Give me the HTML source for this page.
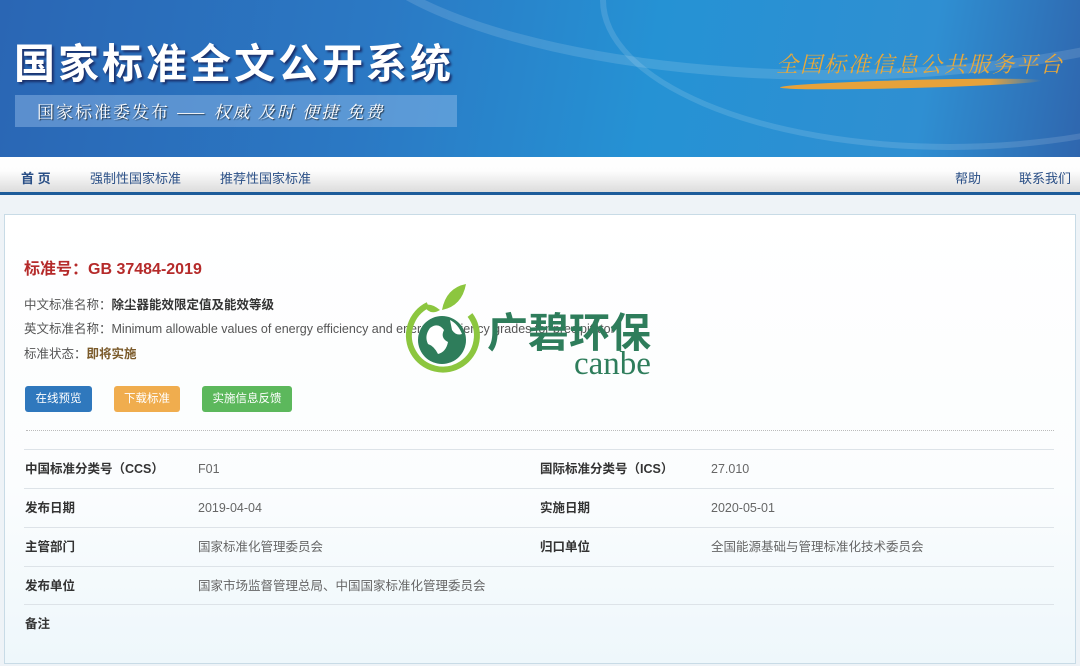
<!DOCTYPE html>
<html><head><meta charset="utf-8"><style>
*{margin:0;padding:0;box-sizing:border-box}
body{width:1080px;height:666px;overflow:hidden;background:#eef3f7;font-family:"Liberation Sans","Noto Sans CJK SC",sans-serif;position:relative}
.hdr{position:absolute;left:0;top:0;width:1080px;height:157px;background:linear-gradient(100deg,#2a66b4 0%,#2b79c4 35%,#2592d4 60%,#2f8fd2 85%,#2f66ae 100%);overflow:hidden}
.arc{position:absolute;border-radius:50%;border:10px solid rgba(255,255,255,.13)}
.t1{position:absolute;left:14px;top:30px;font-size:41px;font-weight:bold;color:#fff;letter-spacing:3px;text-shadow:2px 2px 2px #1a2f6a;font-family:"Noto Sans CJK SC",sans-serif}
.sub{position:absolute;left:15px;top:95px;width:442px;height:32px;background:rgba(150,190,235,.45);color:#fff;font-family:"Noto Serif CJK SC",serif;font-size:17px;line-height:32px;padding-left:22px;letter-spacing:2px;text-shadow:1px 1px 1px #234}
.gold{position:absolute;left:776px;top:48px;font-family:"Noto Serif CJK SC",serif;font-size:22px;color:#e8a83a;font-style:italic;letter-spacing:2px}
.gl{position:absolute;left:780px;top:80px;width:262px;height:8px;border-radius:50%;background:linear-gradient(90deg,#e6a23a,#e6a23a 80%,rgba(230,162,58,0));transform:rotate(-1.5deg)}
.nav{position:absolute;left:0;top:157px;width:1080px;height:38px;background:linear-gradient(#fff,#fdfdfd 40%,#dcdcdc);border-bottom:3px solid #1c5b9a;font-size:13px;color:#2a4f86;font-weight:bold}
.nav span{position:absolute;top:11px}
.panel{position:absolute;left:4px;top:214px;width:1072px;height:450px;background:linear-gradient(#fff 0%,#fbfdfe 60%,#eef7fb 100%);border:1px solid #c8dbe6}
.h{position:absolute;left:24px;top:255px;font-size:16px;font-weight:bold;color:#b52a2a}
.l{position:absolute;left:24px;font-size:12.5px;color:#555;line-height:16px}
.l b{color:#333}
.btn{position:absolute;top:386px;height:26px;line-height:26px;font-size:11.5px;color:#fff;text-align:center;border-radius:3px}
.dot{position:absolute;left:26px;top:430px;width:1028px;border-top:1px dotted #bbb}
.ln{position:absolute;left:24px;width:1030px;border-top:1px solid #dde3e8}
.c{position:absolute;font-size:12.5px;color:#666;line-height:16px;height:16px}
.k{font-weight:bold;color:#333}
</style></head><body>
<div class="hdr">
<div class="arc" style="left:330px;top:-260px;width:1000px;height:340px"></div>
<div class="arc" style="left:600px;top:-150px;width:700px;height:300px;border-width:6px"></div>
<div class="t1">国家标准全文公开系统</div>
<div class="sub">国家标准委发布 —— <i>权威 及时 便捷 免费</i></div>
<div class="gl"></div>
<div class="gold">全国标准信息公共服务平台</div>
</div>
<div class="nav"><span style="left:21px">首 页</span><span style="left:90px;font-weight:normal">强制性国家标准</span><span style="left:220px;font-weight:normal">推荐性国家标准</span><span style="left:955px;font-weight:normal">帮助</span><span style="left:1019px;font-weight:normal">联系我们</span></div>
<div class="panel"></div>
<div class="h">标准号：GB 37484-2019</div>
<div class="l" style="top:297px">中文标准名称：<b>除尘器能效限定值及能效等级</b></div>
<div class="l" style="top:321px">英文标准名称：Minimum allowable values of energy efficiency and energy efficiency grades for precipitator</div>
<div class="l" style="top:346px">标准状态：<b style="color:#7a5a2a">即将实施</b></div>
<div class="btn" style="left:25px;width:67px;background:#2f78bd">在线预览</div>
<div class="btn" style="left:114px;width:66px;background:#f0ad4e">下载标准</div>
<div class="btn" style="left:202px;width:90px;background:#5cb85c">实施信息反馈</div>
<div class="dot"></div>
<div class="ln" style="top:449px"></div><div class="ln" style="top:488px"></div><div class="ln" style="top:527px"></div><div class="ln" style="top:566px"></div><div class="ln" style="top:604px"></div>
<div class="c k" style="left:25px;top:461px">中国标准分类号（CCS）</div><div class="c" style="left:198px;top:461px">F01</div>
<div class="c k" style="left:540px;top:461px">国际标准分类号（ICS）</div><div class="c" style="left:711px;top:461px">27.010</div>
<div class="c k" style="left:25px;top:500px">发布日期</div><div class="c" style="left:198px;top:500px">2019-04-04</div>
<div class="c k" style="left:540px;top:500px">实施日期</div><div class="c" style="left:711px;top:500px">2020-05-01</div>
<div class="c k" style="left:25px;top:539px">主管部门</div><div class="c" style="left:198px;top:539px">国家标准化管理委员会</div>
<div class="c k" style="left:540px;top:539px">归口单位</div><div class="c" style="left:711px;top:539px">全国能源基础与管理标准化技术委员会</div>
<div class="c k" style="left:25px;top:578px">发布单位</div><div class="c" style="left:198px;top:578px">国家市场监督管理总局、中国国家标准化管理委员会</div>
<div class="c k" style="left:25px;top:616px">备注</div>
<svg style="position:absolute;left:400px;top:280px" width="90" height="100" viewBox="0 0 90 100">
<path d="M28 25 A34 34 0 1 0 70 35" fill="none" stroke="#8cc63f" stroke-width="6"/>
<circle cx="42" cy="60" r="24" fill="#2e7d5b"/>
<path d="M30 48 q8 -6 14 2 q-4 8 4 12 q-2 10 -10 12 q-4 -8 -10 -10 q-4 -8 2 -16z M50 40 q8 4 12 14 q-6 2 -10 -4z" fill="#fff"/>
<path d="M42 30 q4 -22 24 -26 q-4 22 -24 26z" fill="#8cc63f"/>
<path d="M40 30 q-10 -8 -16 -4 q6 10 16 4z" fill="#8cc63f"/>
</svg>
<div style="position:absolute;left:487px;top:305px;font-size:41px;font-weight:bold;color:#2e7d5b;font-family:'Noto Sans CJK SC',sans-serif;line-height:48px">广碧环保</div>
<div style="position:absolute;left:574px;top:346px;font-size:33px;color:#2e7d5b;font-family:'Liberation Serif',serif">canbe</div>
</body></html>
